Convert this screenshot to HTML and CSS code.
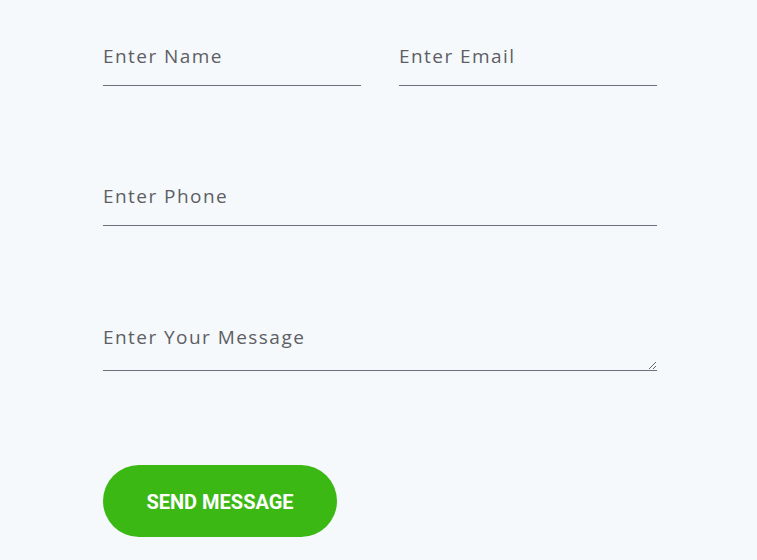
FILE: index.html
```html
<!DOCTYPE html>
<html lang="en">
<head>
    <meta charset="UTF-8">
    <meta name="viewport" content="width=device-width, initial-scale=1.0">
    <title>Contact</title>
    <link rel="stylesheet" href="styles.css">
</head>
<body>
    <!-- Contact Form -->
    <form class="contact-form" onsubmit="return false;">
        <div class="row two-col">
            <input type="text" class="field" placeholder="Enter Name">
            <input type="email" class="field" placeholder="Enter Email">
        </div>
        <div class="row">
            <input type="text" class="field" placeholder="Enter Phone">
        </div>
        <div class="row">
            <textarea class="field message" placeholder="Enter Your Message"></textarea>
        </div>
        <button type="submit" class="send-btn">SEND MESSAGE</button>
    </form>
</body>
</html>
```

FILE: styles.css
```css
/* Global Styles */
body {
    margin: 0;
    padding: 36px 0 0 103px;
    background-color: #f5f9fc;
    font-family: 'Open Sans', sans-serif;
}

.contact-form {
    width: 554px;
    display: flex;
    flex-direction: column;
}

.row {
    display: flex;
    margin-bottom: 90px;
}

.row.two-col {
    gap: 38px;
}

/* Fields */
.field {
    flex: 1;
    min-width: 0;
    height: 50px;
    box-sizing: border-box;
    padding: 0 0 9px 0;
    border: none;
    border-bottom: 1px solid #6d707c;
    background: transparent;
    font-family: 'Open Sans', sans-serif;
    font-size: 19px;
    letter-spacing: 1.45px;
    color: #333;
    outline: none;
}

.field::placeholder {
    color: #5e5e64;
}

.message {
    height: 55px;
    padding: 9px 0 0 0;
    line-height: 24px;
    resize: vertical;
}

.row:has(.message) {
    margin-bottom: 94px;
}

/* Button */
.send-btn {
    align-self: flex-start;
    width: 234px;
    height: 72px;
    padding-top: 3px;
    border: none;
    border-radius: 36px;
    background: #3cb815;
    color: #fff;
    font-family: 'Roboto', sans-serif;
    font-weight: 700;
    font-size: 20px;
    cursor: pointer;
}
```
